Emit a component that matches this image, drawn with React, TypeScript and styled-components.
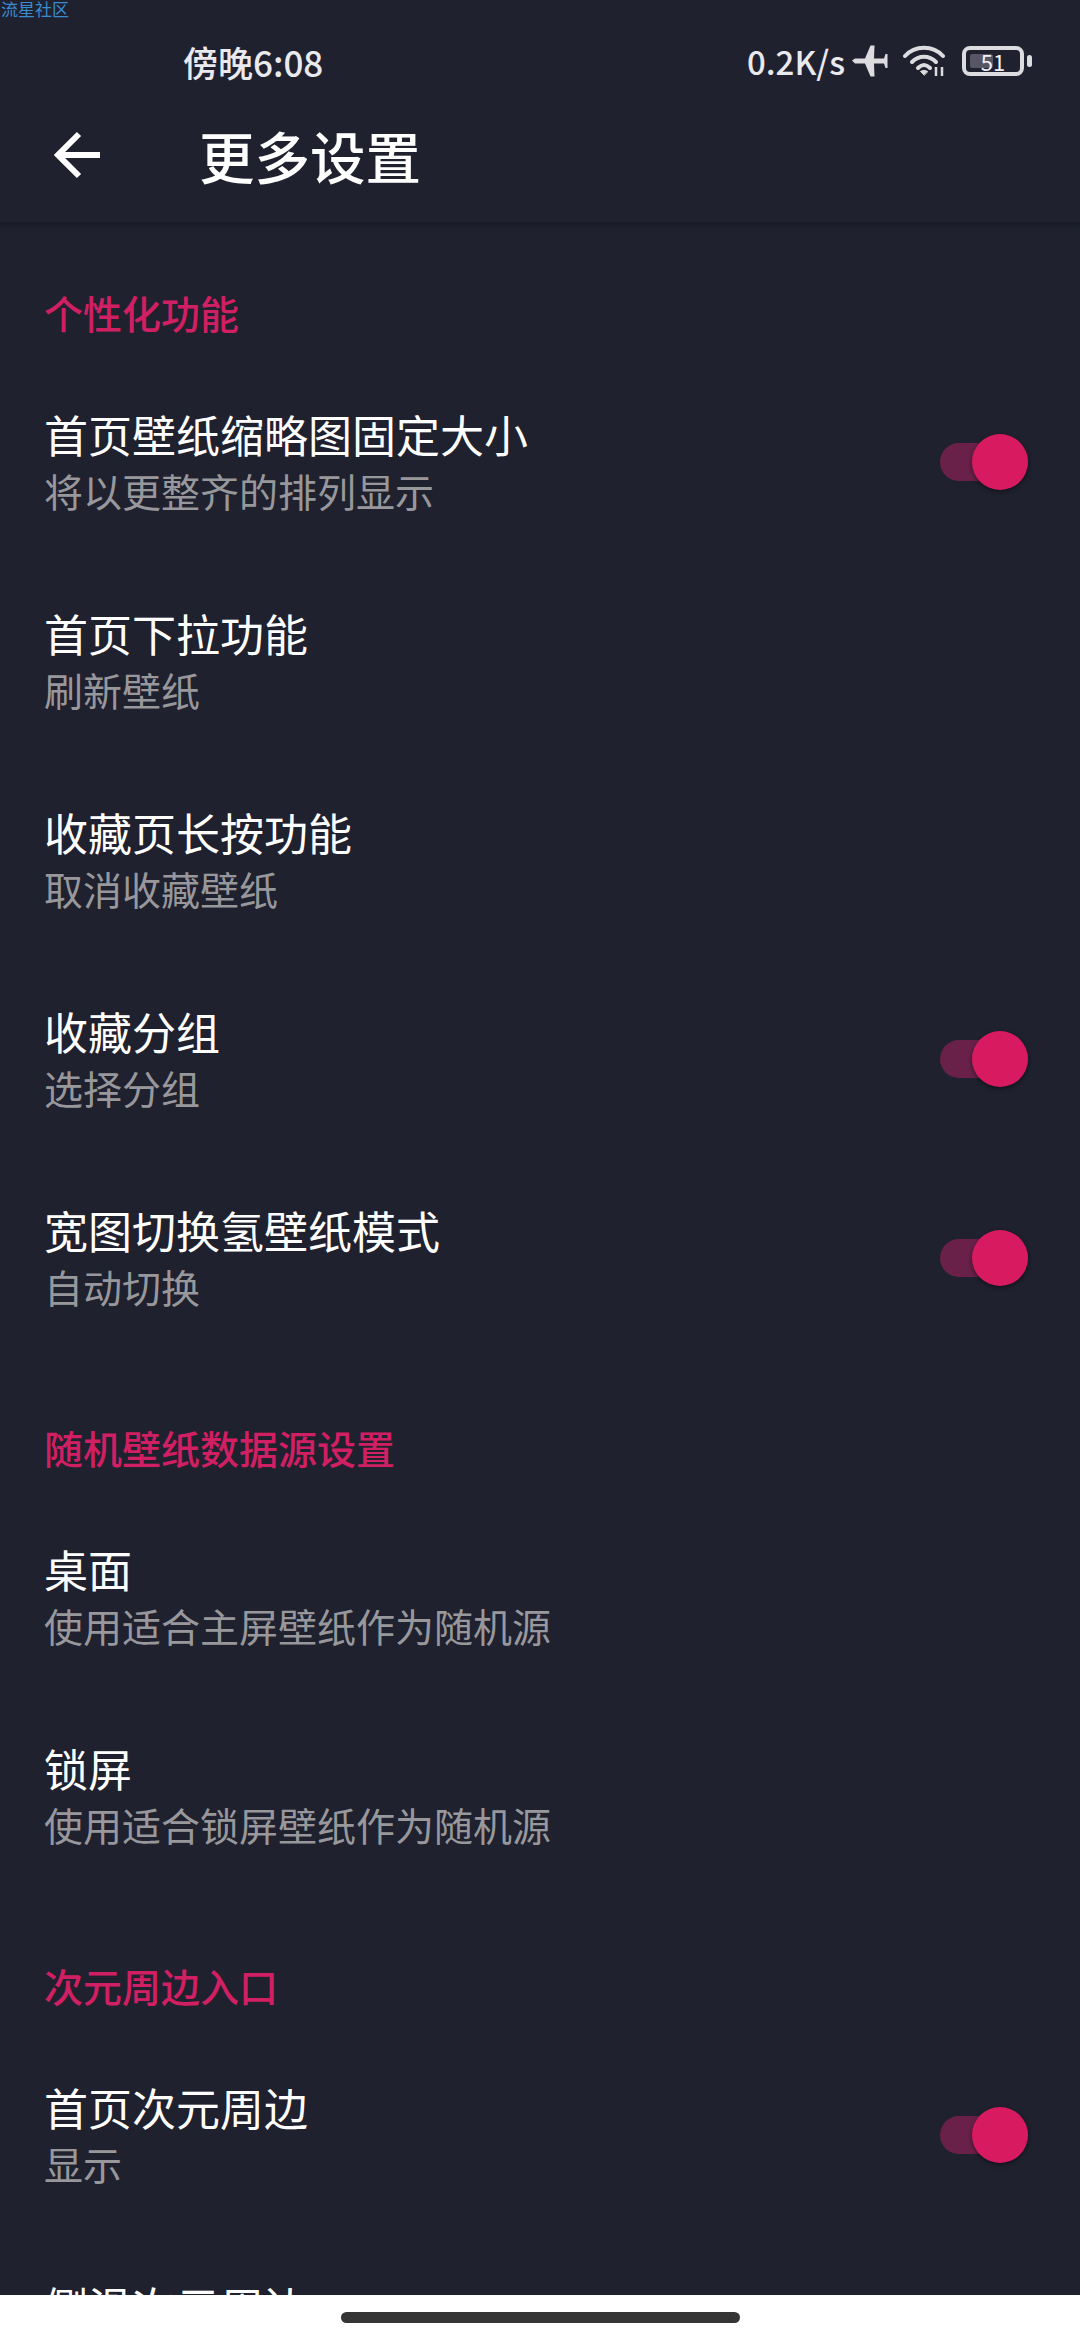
import styled, { createGlobalStyle } from "styled-components";

const GlobalStyle = createGlobalStyle`
    html, body {
        margin: 0;
        padding: 0;
        background-color: #1f212f;
    }
    * {
        box-sizing: border-box;
    }
`;

const Page = styled.div`
    position: relative;
    width: 1080px;
    height: 2340px;
    display: flex;
    flex-direction: column;
    overflow: hidden;
    background-color: #1f212f;
    color: #fff;
    font-family: "Noto Sans CJK SC", "Noto Sans", sans-serif;
`;

const Watermark = styled.div`
    position: absolute;
    top: 0;
    left: 1px;
    font-size: 17px;
    line-height: 17px;
    color: #3b8bd0;
`;

const Header = styled.header`
    flex: none;
    height: 222px;
    box-shadow: 0 3px 5px rgba(20, 21, 32, 0.55);
    position: relative;
    z-index: 1;
`;

const StatusBar = styled.div`
    height: 122px;
    padding: 0 56px 0 183px;
    display: flex;
    align-items: center;
    justify-content: space-between;
    color: #e9e9ee;
`;

const Clock = styled.span`
    font-size: 35px;
    font-weight: 500;
`;

const StatusRight = styled.div`
    display: flex;
    align-items: center;
`;

const Speed = styled.span`
    font-size: 33px;
    font-weight: 500;
    margin-right: 7px;
`;

const StatusIcon = styled.svg`
    display: block;
    margin-left: ${(p: { $gap?: number }) => p.$gap ?? 0}px;
`;

const Battery = styled.div`
    position: relative;
    width: 62px;
    height: 30px;
    margin-left: 15px;
    padding: 4px;
    border: 4px solid #dcdce0;
    border-radius: 8px;
    &::after {
        content: "";
        position: absolute;
        top: 5px;
        right: -12px;
        width: 5px;
        height: 12px;
        border-radius: 3px;
        background-color: #dcdce0;
    }
`;

const BatteryFill = styled.div`
    height: 100%;
    border-radius: 2px;
    background-color: #565664;
`;

const BatteryLevel = styled.span`
    position: absolute;
    inset: 0;
    display: flex;
    align-items: center;
    justify-content: center;
    font-size: 22px;
    color: #f0f0f4;
`;

const Toolbar = styled.div`
    height: 66px;
    display: flex;
    align-items: center;
    padding-left: 54px;
`;

const BackIcon = styled.svg`
    display: block;
    width: 48px;
    height: 48px;
    margin-right: 97px;
`;

const PageTitle = styled.h1`
    margin: 0;
    font-size: 55.5px;
    font-weight: 500;
    line-height: 64px;
`;

const Content = styled.main`
    flex: 1;
    min-height: 0;
    overflow: hidden;
`;

const SectionTitle = styled.h2`
    margin: 0;
    padding: 62px 44px 0;
    height: 140px;
    font-size: 39px;
    font-weight: 500;
    line-height: 56px;
    color: #d01f62;
`;

const Row = styled.div`
    height: 199px;
    padding: 0 52px 0 44px;
    display: flex;
    align-items: center;
    justify-content: space-between;
`;

const RowText = styled.div`
    display: flex;
    flex-direction: column;
`;

const RowTitle = styled.div`
    font-size: 44px;
    line-height: 56px;
    color: #fff;
`;

const RowSub = styled.div`
    font-size: 39px;
    line-height: 56px;
    color: #98989c;
`;

const Switch = styled.div`
    position: relative;
    width: 88px;
    height: 38px;
    border-radius: 19px;
    background-color: #6a2149;
    &::after {
        content: "";
        position: absolute;
        top: -9px;
        right: 0;
        width: 56px;
        height: 56px;
        border-radius: 50%;
        background-color: #d81b60;
        box-shadow: 0 2px 5px rgba(0, 0, 0, 0.45);
    }
`;

const NavBar = styled.div`
    flex: none;
    height: 45px;
    background-color: #fff;
    display: flex;
    justify-content: center;
    padding-top: 17px;
    position: relative;
    z-index: 1;
`;

const NavPill = styled.div`
    width: 399px;
    height: 11px;
    border-radius: 6px;
    background-color: #353535;
`;

const sections = [
    {
        title: "个性化功能",
        rows: [
            { title: "首页壁纸缩略图固定大小", sub: "将以更整齐的排列显示", on: true },
            { title: "首页下拉功能", sub: "刷新壁纸", on: false },
            { title: "收藏页长按功能", sub: "取消收藏壁纸", on: false },
            { title: "收藏分组", sub: "选择分组", on: true },
            { title: "宽图切换氢壁纸模式", sub: "自动切换", on: true },
        ],
    },
    {
        title: "随机壁纸数据源设置",
        rows: [
            { title: "桌面", sub: "使用适合主屏壁纸作为随机源", on: false },
            { title: "锁屏", sub: "使用适合锁屏壁纸作为随机源", on: false },
        ],
    },
    {
        title: "次元周边入口",
        rows: [
            { title: "首页次元周边", sub: "显示", on: true },
            { title: "侧滑次元周边", sub: "显示", on: false },
        ],
    },
];

export default function App() {
    return (
        <Page>
            <GlobalStyle />
            <Watermark>流星社区</Watermark>
            <Header>
                <StatusBar>
                    <Clock>傍晚6:08</Clock>
                    <StatusRight>
                        <Speed>0.2K/s</Speed>
                        <StatusIcon width="36" height="32" viewBox="0 0 36 32" fill="#dcdce0">
                            <path d="M0 15.5 L3 13.5 H13 L18.5 0.5 H22.5 L22 13.5 H32 L33.5 9 H35.5 V23 H33.5 L32 18.5 H22 L22.5 31.5 H18.5 L13 18.5 H3 Z" />
                        </StatusIcon>
                        <StatusIcon $gap={15} width="44" height="32" viewBox="0 0 44 32" fill="none" stroke="#dcdce0" strokeWidth="4" strokeLinecap="round">
                            <path d="M2 11 C12 0 30 0 40 11" />
                            <path d="M9 17 C16 10 26 10 33 17" />
                            <path d="M15 23 C19 19 23 19 27 23" />
                            <path d="M21 30 L17.5 26.5 C19.5 25 22.5 25 24.5 26.5 Z" fill="#dcdce0" strokeWidth="1" />
                            <path d="M33 22 V31 M39 22 V31" strokeWidth="2.5" strokeLinecap="butt" />
                        </StatusIcon>
                        <Battery>
                            <BatteryFill style={{ width: "51%" }} />
                            <BatteryLevel>51</BatteryLevel>
                        </Battery>
                    </StatusRight>
                </StatusBar>
                <Toolbar>
                    <BackIcon viewBox="0 0 48 48" fill="none" stroke="#fff" strokeWidth="6">
                        <path d="M46 24 H5 M25 3 L4 24 L25 45" />
                    </BackIcon>
                    <PageTitle>更多设置</PageTitle>
                </Toolbar>
            </Header>
            <Content>
                {sections.map((s) => (
                    <section key={s.title}>
                        <SectionTitle>{s.title}</SectionTitle>
                        {s.rows.map((r) => (
                            <Row key={r.title}>
                                <RowText>
                                    <RowTitle>{r.title}</RowTitle>
                                    <RowSub>{r.sub}</RowSub>
                                </RowText>
                                {r.on && <Switch />}
                            </Row>
                        ))}
                    </section>
                ))}
            </Content>
            <NavBar>
                <NavPill />
            </NavBar>
        </Page>
    );
}
